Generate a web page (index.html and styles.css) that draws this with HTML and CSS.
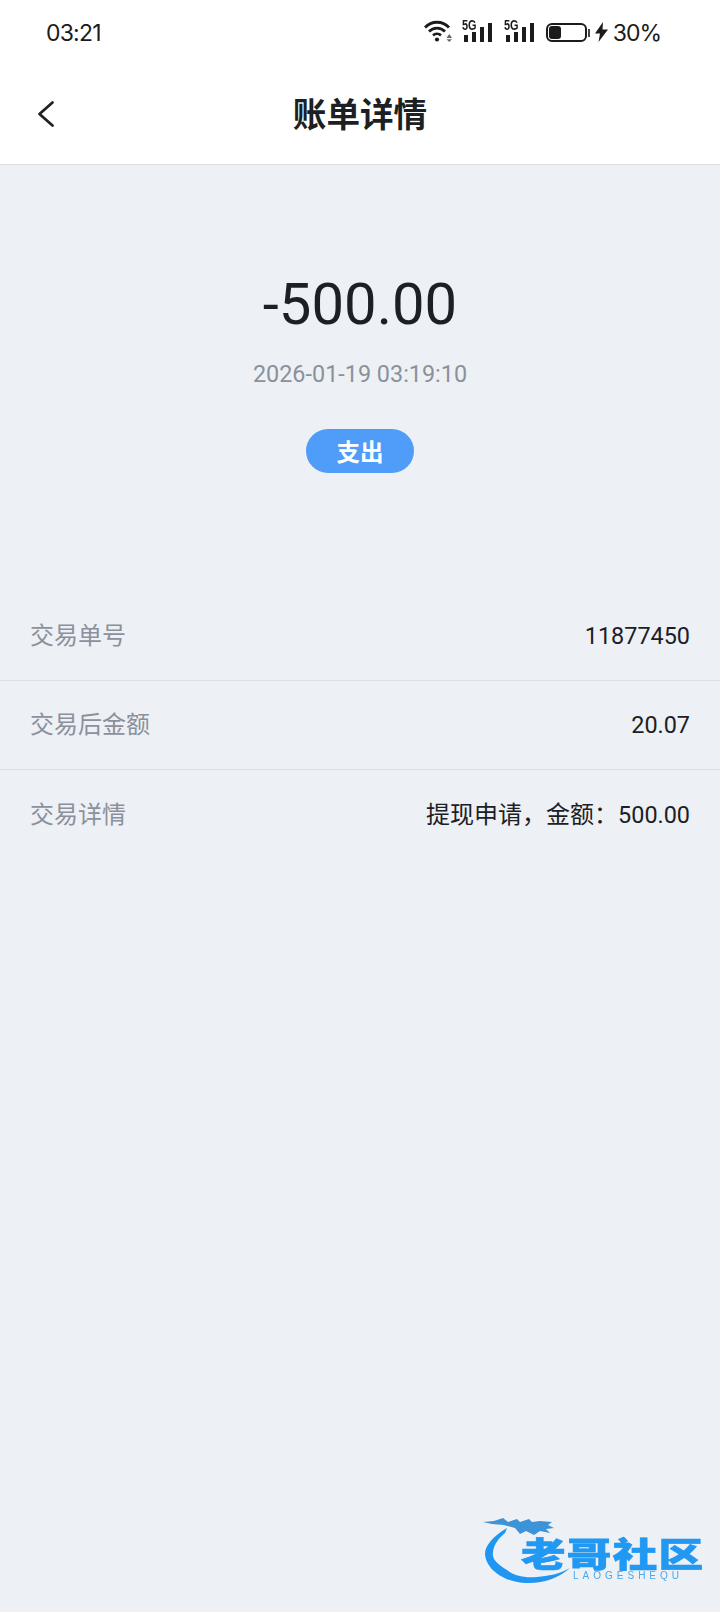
FILE: index.html
```html
<!DOCTYPE html>
<html lang="zh-CN">
<head>
<meta charset="utf-8">
<title>账单详情</title>
<link rel="stylesheet" href="styles.css">
</head>
<body>
<div class="page">
  <header class="top">
    <div class="status">
      <span class="time">03:21</span>
      <div class="status-icons">
        <div class="glyphs">
          <svg class="wifi" width="28" height="22" viewBox="0 0 28 22">
            <g fill="none" stroke="#1b1b1b" stroke-width="2.8">
              <path d="M1 7.500C7.500 .5 18.500 .5 25 7.500"/>
              <path d="M5 11.500C9.500 7 16.500 7 21 11.500"/>
              <path d="M9 15.300C11.200 13.500 14.800 13.500 17 15.300"/>
            </g>
            <circle cx="13" cy="19.500" r="2.100" fill="#1b1b1b"/>
            <path d="M22.500 18h5.500l-2.750-4zM22.500 19.200h5.500l-2.750 2.800z" fill="#666"/>
          </svg>
          <div class="signal">
            <span class="five-g">5G</span>
            <i class="bar b1"></i><i class="bar b2"></i><i class="bar b3"></i><i class="bar b4"></i>
          </div>
          <div class="signal">
            <span class="five-g">5G</span>
            <i class="bar b1"></i><i class="bar b2"></i><i class="bar b3"></i><i class="bar b4"></i>
          </div>
          <div class="battery"><div class="level"></div></div>
          <div class="cap"></div>
          <svg class="bolt" width="13" height="20" viewBox="0 0 13 20"><path d="M8 0 0 11.500H5L3.500 20 13 7.500H7.500z" fill="#1b1b1b"/></svg>
        </div>
        <span class="pct">30%</span>
      </div>
    </div>
    <div class="nav">
      <svg class="back" width="18" height="30" viewBox="0 0 18 30"><path d="M15.500 3.500 2.500 15l13 11.500" fill="none" stroke="#222" stroke-width="2.800" stroke-linecap="round" stroke-linejoin="round"/></svg>
      <h1 class="title">账单详情</h1>
    </div>
  </header>

  <main class="body">
    <section class="summary">
      <div class="amount">-500.00</div>
      <div class="date">2026-01-19 03:19:10</div>
      <div class="tag">支出</div>
    </section>
    <section class="rows">
      <div class="row"><span class="key">交易单号</span><span class="val"><span class="num">11877450</span></span></div>
      <div class="row"><span class="key">交易后金额</span><span class="val"><span class="num">20.07</span></span></div>
      <div class="row"><span class="key">交易详情</span><span class="val">提现申请，金额：<span class="num">500.00</span></span></div>
    </section>
  </main>

  <div class="mark">
    <svg class="dragon" width="112" height="76" viewBox="0 0 112 76">
      <path d="M25 12C10 21 3 30 3 38c1 16 20 28 40 29 18 1 34-5 45-15-10 6-22 8-33 9-12 1-23-1-30-7C13 47 10 42 11 36c1-8 6-14 12-19z" fill="#1f96f2"/>
      <path d="M1 6 12 5 21 2 26 6 35 3 38 6 47 3 50 6 58 5 70 6 66 9 72 12 64 13 68 17 58 15 52 19 44 15 38 18 33 12 22 9 10 8z" fill="#3d93d8"/>
    </svg>
    <div class="mark-name">老哥社区</div>
    <div class="mark-sub">LAOGESHEQU</div>
  </div>
</div>
</body>
</html>
```
FILE: styles.css
```css
* { box-sizing: border-box; }
html, body { margin: 0; padding: 0; }
body { font-family: Roboto, "Noto Sans CJK SC", sans-serif; background: #edf0f4; }
.page { position: relative; width: 720px; height: 1612px; overflow: hidden; display: flex; flex-direction: column; background: #edf0f4; }
.top { background: #fff; height: 165px; border-bottom: 1px solid #dddfe2; flex: none; }
.status { height: 66px; display: flex; align-items: center; justify-content: space-between; padding: 0 59px 0 46px; }
.time { font: 400 23px/24px "Inter", sans-serif; letter-spacing: -.8px; color: #1b1b1b; }
.status-icons { display: flex; align-items: center; }
.glyphs { display: flex; align-items: flex-end; height: 22px; margin-bottom: 4px; }
.wifi { margin-right: 10px; }
.signal { position: relative; width: 31px; height: 22px; margin-right: 11px; padding-left: 2px; display: flex; align-items: flex-end; gap: 3.500px; }
.five-g { position: absolute; left: 0; top: -2px; font: 700 14px/14px "Liberation Sans", sans-serif; color: #1b1b1b; transform: scaleX(.78); transform-origin: left center; }
.bar { display: block; width: 4.500px; background: #1b1b1b; }
.b1 { height: 7px; }
.b2 { height: 10px; }
.b3 { height: 15px; }
.b4 { height: 19px; }
.battery { width: 41px; height: 19px; border: 2px solid #1b1b1b; border-radius: 6px; padding: 1px; }
.level { width: 12px; height: 100%; background: #1b1b1b; border-radius: 3px; }
.cap { width: 2px; height: 8px; background: #444; margin: 0 5px 5px 1px; }
.bolt { margin-right: 5px; }
.pct { font: 400 23px/24px "Inter", sans-serif; letter-spacing: -1px; color: #1b1b1b; }
.nav { position: relative; height: 98px; display: flex; align-items: center; justify-content: center; padding-bottom: 4px; }
.back { position: absolute; left: 37px; top: 33px; }
.title { margin: 0; font: 700 33.600px/1.2 "Noto Sans CJK SC", sans-serif; color: #1c1f23; }
.body { flex: 1; display: flex; flex-direction: column; }
.summary { display: flex; flex-direction: column; align-items: center; padding-top: 101px; }
.amount { font: 400 58px/76px Roboto, sans-serif; color: #1c2025; }
.date { margin-top: 16px; font: 400 23.400px/32px Roboto, sans-serif; color: #8b909c; }
.tag { margin-top: 39px; width: 108px; height: 44px; border-radius: 22px; background: #4f9cf9; color: #fff; font: 700 23.500px/44px "Noto Sans CJK SC", sans-serif; text-align: center; }
.rows { margin-top: 119px; }
.row { height: 89px; padding: 0 30px; display: flex; align-items: center; justify-content: space-between; border-bottom: 1px solid #dbdfe4; font-size: 24px; line-height: 34px; }
.row:last-child { border-bottom: 0; }
.key { color: #8b909c; }
.val { color: #1c2025; }
.num { font-size: 23.400px; }
.mark { position: absolute; left: 482px; top: 1516px; width: 226px; height: 78px; filter: blur(.6px); }
.dragon { position: absolute; left: 0; top: 0; }
.mark-name { position: absolute; left: 39px; top: 21px; width: 140px; font: 900 34px/32px "Noto Sans CJK SC", sans-serif; letter-spacing: 1px; color: #2198f2; -webkit-text-stroke: .7px #2198f2; white-space: nowrap; transform: scaleX(1.31); transform-origin: left center; }
.mark-sub { position: absolute; left: 91px; top: 54px; font: 400 10px/12px "Liberation Sans", sans-serif; letter-spacing: 4px; color: #4ba8ea; white-space: nowrap; }
```
